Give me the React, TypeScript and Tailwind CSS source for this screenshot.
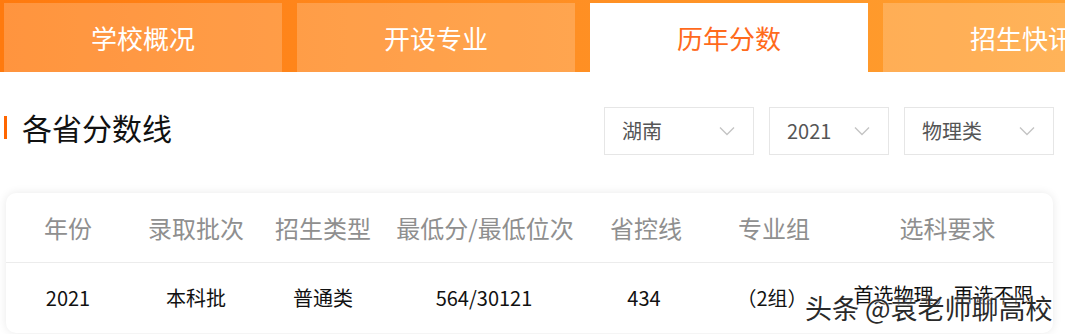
const TABS = [
  { id: 'overview', label: '学校概况' },
  { id: 'majors', label: '开设专业' },
  { id: 'scores', label: '历年分数' },
  { id: 'news', label: '招生快讯' },
]

const COLS = ['年份', '录取批次', '招生类型', '最低分/最低位次', '省控线', '专业组', '选科要求']
const ROW = ['2021', '本科批', '普通类', '564/30121', '434', '（2组）', '首选物理，再选不限']

const FONT = { fontFamily: '"Noto Sans CJK SC", "Noto Sans", sans-serif' }

function Chevron() {
  return (
    <svg width="16" height="10" viewBox="0 0 16 10" fill="none" className="shrink-0">
      <path d="M1 1.5 L8 8.5 L15 1.5" stroke="#c4c4c4" strokeWidth="1.4" />
    </svg>
  )
}

function Select({ value, width }: { value: string; width: string }) {
  return (
    <div className={`${width} h-[48px] border border-[#e6e6e6] bg-white flex items-center justify-between pl-[17px] pr-[18px] text-[20px] text-[#555]`}>
      <span>{value}</span>
      <Chevron />
    </div>
  )
}

export default function App() {
  const active = 'scores'
  return (
    <div className="w-[1065px] h-[334px] overflow-hidden bg-white relative" style={FONT}>
      <nav className="h-[72px] pt-[3px] pl-[4px] flex gap-[15px] bg-gradient-to-r from-[#ff7a0e] to-[#ffa030] overflow-hidden">
        {TABS.map(t => (
          <div
            key={t.id}
            className={`w-[278px] shrink-0 h-[69px] flex items-center justify-center text-[26px] ${active === t.id ? 'bg-white text-[#ff6a1c]' : 'bg-white/20 text-white'}`}
          >
            {t.label}
          </div>
        ))}
      </nav>

      <div className="flex items-center justify-between mt-[35px] pr-[11px]">
        <div className="flex items-center gap-[15px] pl-[4px] -mt-[8px]">
          <span className="w-[3px] h-[23px] bg-[#ff6600]" />
          <h2 className="text-[30px] text-[#111] leading-none">各省分数线</h2>
        </div>
        <div className="flex gap-[15px]">
          <Select value="湖南" width="w-[150px]" />
          <Select value="2021" width="w-[120px]" />
          <Select value="物理类" width="w-[150px]" />
        </div>
      </div>

      <div className="mt-[38px] ml-[6px] mr-[12px] rounded-[10px] bg-white shadow-[0_0_10px_rgba(0,0,0,0.09)]">
        <div className="grid grid-cols-[124px_132px_122px_202px_120px_136px_1fr] h-[70px] items-center border-b border-[#ececec] text-[24px] text-[#8f8f8f]">
          {COLS.map(c => (
            <div key={c} className="text-center">{c}</div>
          ))}
        </div>
        <div className="grid grid-cols-[124px_132px_122px_200px_120px_136px_1fr] h-[70px] items-center text-[20px] text-[#111]">
          {ROW.map((c, i) => (
            <div key={i} className={`text-center ${i === 6 ? '-mt-[6px] -ml-[6px]' : ''}`}>{c}</div>
          ))}
        </div>
      </div>

      <div className="absolute left-[805px] top-[288px] text-[27px] text-[#2a2a2a] [text-shadow:0_0_2px_#fff,0_0_2px_#fff]">
        头条 @袁老师聊高校
      </div>
    </div>
  )
}
